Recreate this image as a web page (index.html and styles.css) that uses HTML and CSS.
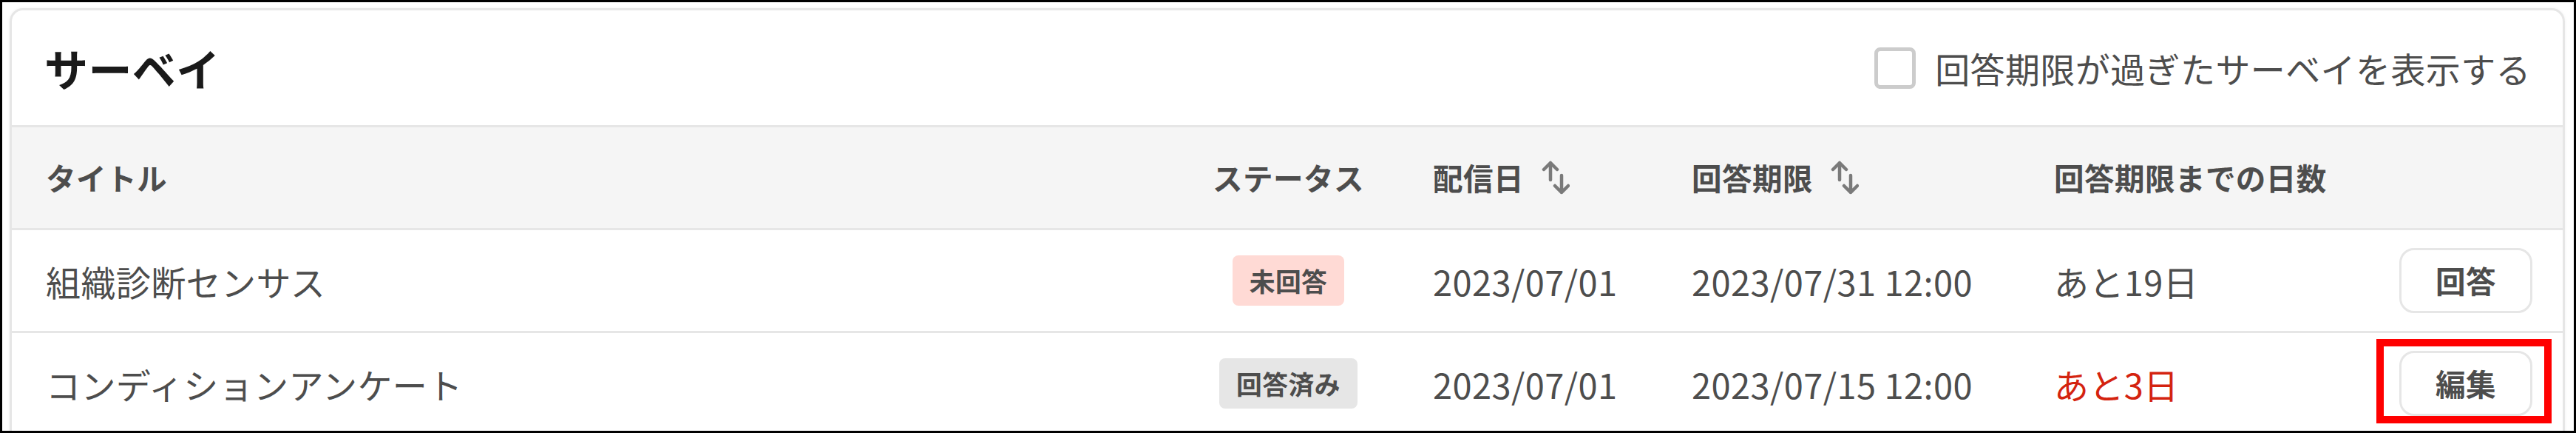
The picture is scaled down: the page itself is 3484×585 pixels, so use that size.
FILE: index.html
```html
<!DOCTYPE html>
<html lang="ja">
<head>
    <meta charset="UTF-8">
    <meta name="viewport" content="width=device-width, initial-scale=1.0">
    <title>サーベイ</title>
    <link rel="stylesheet" href="styles.css">
</head>
<body>
    <div class="frame">
        <section class="card">
            <header class="card-header">
                <h1>サーベイ</h1>
                <label class="toggle">
                    <span class="checkbox"></span>
                    <span>回答期限が過ぎたサーベイを表示する</span>
                </label>
            </header>

            <table class="survey-table">
                <colgroup>
                    <col class="col-title">
                    <col class="col-status">
                    <col class="col-sent">
                    <col class="col-due">
                    <col class="col-days">
                    <col class="col-action">
                </colgroup>
                <thead>
                    <tr>
                        <th>タイトル</th>
                        <th class="center">ステータス</th>
                        <th>
                            <span class="sortable">配信日
                                <svg class="sort-icon" viewBox="0 0 40 48" width="40" height="48">
                                    <path d="M14 27V4M5 13l9-9 9 9M29 21v23M20 35l9 9 9-9"/>
                                </svg>
                            </span>
                        </th>
                        <th>
                            <span class="sortable">回答期限
                                <svg class="sort-icon" viewBox="0 0 40 48" width="40" height="48">
                                    <path d="M14 27V4M5 13l9-9 9 9M29 21v23M20 35l9 9 9-9"/>
                                </svg>
                            </span>
                        </th>
                        <th>回答期限までの日数</th>
                        <th></th>
                    </tr>
                </thead>
                <tbody>
                    <tr>
                        <td>組織診断センサス</td>
                        <td class="center"><span class="badge badge-pending">未回答</span></td>
                        <td>2023/07/01</td>
                        <td>2023/07/31 12:00</td>
                        <td>あと19日</td>
                        <td class="right"><button class="btn">回答</button></td>
                    </tr>
                    <tr>
                        <td>コンディションアンケート</td>
                        <td class="center"><span class="badge badge-done">回答済み</span></td>
                        <td>2023/07/01</td>
                        <td>2023/07/15 12:00</td>
                        <td class="urgent">あと3日</td>
                        <td class="right">
                            <span class="marked">
                                <button class="btn">編集</button>
                                <span class="highlight"></span>
                            </span>
                        </td>
                    </tr>
                </tbody>
            </table>
        </section>
    </div>
</body>
</html>
```

FILE: styles.css
```css
* {
    margin: 0;
    padding: 0;
    box-sizing: border-box;
}
body {
    font-family: "Noto Sans CJK JP", "Noto Sans", sans-serif;
    color: #4d4d4d;
    background: #fff;
    letter-spacing: 0.025em;
    width: 3484px;
    height: 585px;
    overflow: hidden;
}
.frame {
    height: 585px;
    border: 3px solid #000;
    padding: 8px 12px 0 10px;
    overflow: hidden;
}
.card {
    background: #fff;
    border: 3px solid #e6e6e6;
    border-radius: 18px 18px 0 0;
    box-shadow: 0 0 4px rgba(0, 0, 0, 0.06);
    overflow: hidden;
}
.card-header {
    height: 158px;
    border-bottom: 3px solid #e6e6e6;
    padding: 0 43px 0 44px;
    display: flex;
    align-items: center;
    justify-content: space-between;
}
.card-header h1 {
    font-size: 59px;
    font-weight: 700;
    color: #1a1a1a;
    line-height: 1;
}
.toggle {
    display: flex;
    align-items: center;
    gap: 26px;
    font-size: 47px;
    line-height: 1;
    color: #4d4d4d;
}
.checkbox {
    width: 56px;
    height: 56px;
    border: 5px solid #cccccc;
    border-radius: 8px;
    background: #fff;
}
.survey-table {
    width: 100%;
    table-layout: fixed;
    border-collapse: separate;
    border-spacing: 0;
}
.col-title { width: 1577px; }
.col-status { width: 299px; }
.col-sent { width: 350px; }
.col-due { width: 490px; }
.col-days { width: 467px; }
.col-action { width: 267px; }
.survey-table th,
.survey-table td {
    height: 139px;
    padding: 0 46px;
    border-bottom: 3px solid #e6e6e6;
    text-align: left;
    vertical-align: middle;
    white-space: nowrap;
    line-height: 1;
}
.survey-table th {
    background: #f5f5f5;
    font-size: 40.6px;
    font-weight: 700;
    color: #4d4d4d;
}
.survey-table td {
    font-size: 47px;
    color: #4d4d4d;
}
.survey-table .center {
    text-align: center;
    padding: 0;
}
.survey-table .right {
    text-align: right;
    padding: 0 41px 0 0;
}
.survey-table .urgent {
    color: #d4230f;
}
.sortable {
    display: inline-flex;
    align-items: center;
    gap: 22px;
}
.sort-icon {
    fill: none;
    stroke: #7a7a7a;
    stroke-width: 4.5;
    stroke-linecap: round;
    stroke-linejoin: round;
}
.badge {
    display: inline-flex;
    align-items: center;
    height: 68px;
    padding: 0 23px;
    border-radius: 8px;
    font-size: 34.8px;
    font-weight: 700;
    color: #4d4d4d;
}
.badge-pending {
    background: #ffdad5;
}
.badge-done {
    background: #e6e6e6;
}
.btn {
    height: 88px;
    padding: 0 46px;
    border: 3px solid #e6e6e6;
    border-radius: 20px;
    background: #fff;
    font-family: inherit;
    font-size: 40.6px;
    font-weight: 700;
    letter-spacing: inherit;
    color: #4d4d4d;
    line-height: 1;
}
.marked {
    position: relative;
    display: inline-block;
    vertical-align: middle;
}
.marked .btn {
    display: block;
}
.highlight {
    position: absolute;
    left: -31px;
    top: -16px;
    right: -26px;
    bottom: -10px;
    border: 10px solid #ff0000;
}
```
